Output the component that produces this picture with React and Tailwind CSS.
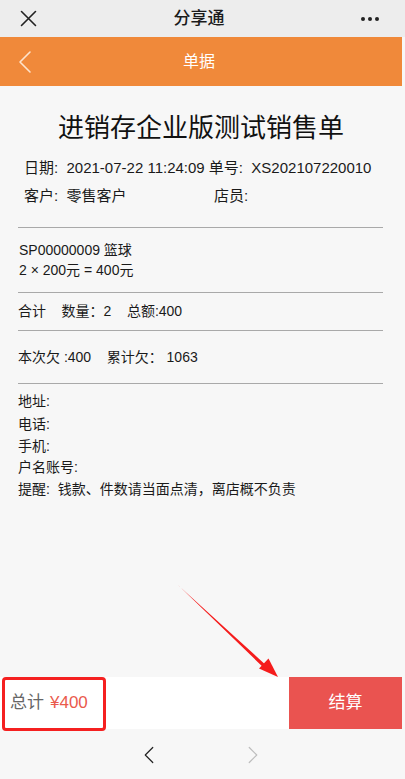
import React from 'react'

const font = { fontFamily: '"Liberation Sans", "Noto Sans CJK SC", sans-serif' }

function Chevron({ dir = 'left', className = '' }) {
  return (
    <svg className={className} viewBox="0 0 16 24" fill="none" stroke="currentColor" strokeWidth={1.6} strokeLinecap="round" strokeLinejoin="round">
      {dir === 'left' ? <path d="M13 2 L3 12 L13 22" /> : <path d="M3 2 L13 12 L3 22" />}
    </svg>
  )
}

function Divider() {
  return <div className="h-px bg-[#a9a9a9] mx-[18px] mr-[22px]" />
}

export default function App() {
  return (
    <div className="relative w-[405px] h-[779px] bg-[#f7f7f7] flex flex-col overflow-hidden text-[#1a1a1a]" style={font}>
      {/* wechat top bar */}
      <div className="h-[37px] bg-[#ededed] flex items-center justify-between px-[20px] shrink-0">
        <svg className="w-[17px] h-[17px] text-[#222]" viewBox="0 0 17 17" stroke="currentColor" strokeWidth={1.6} strokeLinecap="round">
          <path d="M1.5 1.5 L15.5 15.5 M15.5 1.5 L1.5 15.5" />
        </svg>
        <span className="text-[17px] font-medium text-[#1b1b1b]">分享通</span>
        <div className="flex gap-[3px] mr-[6px]">
          <span className="w-[4px] h-[4px] rounded-full bg-[#222]" />
          <span className="w-[4px] h-[4px] rounded-full bg-[#222]" />
          <span className="w-[4px] h-[4px] rounded-full bg-[#222]" />
        </div>
      </div>

      {/* orange header */}
      <div className="h-[49px] bg-[#f0893a] flex items-center shrink-0 mr-[3px]">
        <div className="w-[60px] pl-[17px]">
          <Chevron className="w-[16px] h-[24px] text-[#fde3cc]" />
        </div>
        <span className="flex-1 text-center text-white text-[16px] -ml-[4px] mr-[60px]">单据</span>
      </div>

      {/* receipt */}
      <div className="flex-1 flex flex-col">
        <h1 className="text-center text-[26px] text-[#111] mt-[26px] leading-[32px] pr-[3px]">进销存企业版测试销售单</h1>
        <div className="px-[24px] mt-[14px] text-[15px] leading-[20px] text-[#1a1a1a]">
          <div>日期:&nbsp; 2021-07-22 11:24:09 单号:&nbsp; XS202107220010</div>
          <div className="flex mt-[8px]">
            <span className="w-[190px]">客户:&nbsp; 零售客户</span>
            <span>店员:</span>
          </div>
        </div>

        <div className="mt-[21px]"><Divider /></div>
        <div className="px-[19px] pt-[12px] pb-[12px] text-[14px] leading-[20px]">
          <div>SP00000009 篮球</div>
          <div>2 × 200元 = 400元</div>
        </div>
        <Divider />
        <div className="px-[18px] py-[9px] text-[14px] leading-[19px]">
          合计&nbsp;&nbsp;&nbsp; 数量：2&nbsp;&nbsp;&nbsp; 总额:400
        </div>
        <Divider />
        <div className="px-[18px] pt-[17px] pb-[16px] text-[14px] leading-[19px]">
          本次欠 :400&nbsp;&nbsp;&nbsp; 累计欠：&nbsp;1063
        </div>
        <Divider />
        <div className="px-[18px] pt-[6px] text-[14px] leading-[22px]">
          <div className="mb-[1px]">地址:</div>
          <div>电话:</div>
          <div>手机:</div>
          <div className="-mt-[1px]">户名账号:</div>
          <div>提醒:&nbsp; 钱款、件数请当面点清，离店概不负责</div>
        </div>
      </div>

      {/* checkout bar */}
      <div className="h-[52px] flex shrink-0 mr-[3px] mb-[1px]">
        <div className="flex-1 bg-white flex items-center pl-[10px] text-[17px]">
          <span className="text-[#666]">总计</span>
          <span className="text-[#ea5a4c] ml-[6px]">¥400</span>
        </div>
        <div className="w-[113px] bg-[#ea5350] flex items-center justify-center text-white text-[17px]">结算</div>
      </div>

      {/* bottom nav */}
      <div className="h-[49px] flex items-center justify-center gap-[92px] shrink-0 pr-[4px]">
        <Chevron className="w-[12px] h-[20px] text-[#222]" />
        <Chevron dir="right" className="w-[12px] h-[20px] text-[#bdbdbd]" />
      </div>

      {/* annotations */}
      <div className="absolute left-[2px] top-[677px] w-[104px] h-[54px] border-[3px] border-[#f52020] rounded-[4px]" />
      <svg className="absolute left-0 top-0 pointer-events-none" width="405" height="779">
        <polygon points="178,585 179.5,586.5 268.5,667.5 266,670" fill="#f51c1c" />
        <polygon points="278,677 259,668.5 268.5,658.5" fill="#f51c1c" />
      </svg>
    </div>
  )
}
